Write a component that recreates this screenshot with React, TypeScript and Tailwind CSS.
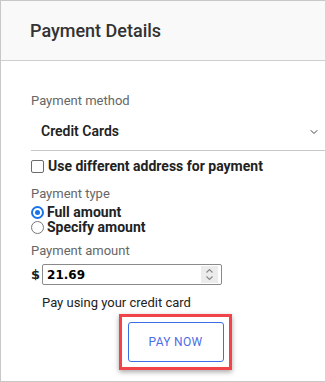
import { ChevronDown } from 'lucide-react'

export default function App() {
  return (
    <div className="w-[325px] h-[382px] bg-white border-l border-t border-b border-[#c8c8c8] font-['Roboto',sans-serif] text-[#333]">
      {/* Header */}
      <div className="h-[60px] bg-[#f9f9f9] border-b border-[#cfcfcf] flex items-center pl-[29px]">
        <h2 className="text-[18px] font-medium text-[#333]">Payment Details</h2>
      </div>

      {/* Body */}
      <div className="pl-[30px] pt-[31px]">
        <div className="text-[13px] text-[#666] leading-[18px]">Payment method</div>
        <div className="mt-[3px] h-[38px] border-b border-[#c8c8c8] flex items-center justify-between pl-[10px] pr-[5px]">
          <span className="text-[14px] font-semibold text-[#222]">Credit Cards</span>
          <ChevronDown size={12} strokeWidth={2} className="text-[#444]" />
        </div>

        <label className="mt-[5px] flex items-center gap-[4px] leading-[21px]">
          <span className="w-[13px] h-[13px] border border-[#6b6b6b] rounded-[2px] bg-white" />
          <span className="text-[14px] font-bold text-[#222]">Use different address for payment</span>
        </label>

        <div className="mt-[9px] text-[13px] text-[#666] leading-[16px]">Payment type</div>
        <div className="mt-[3px] flex flex-col leading-[15px]">
          <label className="flex items-center gap-[3px]">
            <span className="w-[13px] h-[13px] rounded-full border-2 border-[#1a73e8] flex items-center justify-center">
              <span className="w-[5px] h-[5px] rounded-full bg-[#1a73e8]" />
            </span>
            <span className="text-[14px] font-bold text-[#222]">Full amount</span>
          </label>
          <label className="flex items-center gap-[3px]">
            <span className="w-[13px] h-[13px] rounded-full border border-[#777] bg-white" />
            <span className="text-[14px] font-bold text-[#222]">Specify amount</span>
          </label>
        </div>

        <div className="mt-[8px] text-[13px] text-[#666] leading-[16px]">Payment amount</div>
        <div className="mt-[5px] flex items-center gap-[2px]">
          <span className="text-[13px] font-bold text-[#222] font-['DejaVu_Sans',sans-serif]">$</span>
          <div className="w-[180px] h-[21px] border border-[#8a8a8a] rounded-[2px] flex items-center justify-between pl-[4px] pr-[3px]">
            <span className="text-[12px] font-bold text-black font-['DejaVu_Sans',sans-serif]">21.69</span>
            <span className="w-[17px] h-[17px] bg-[#ececec] flex flex-col items-center justify-center">
              <svg width="9" height="13" viewBox="0 0 9 13" fill="none" stroke="#8a8a8a" strokeWidth="1.2">
                <path d="M1.5 4.5 L4.5 1.5 L7.5 4.5" />
                <path d="M1.5 8.5 L4.5 11.5 L7.5 8.5" />
              </svg>
            </span>
          </div>
        </div>

        <div className="mt-[7px] pl-[11px] text-[13px] leading-[21px] text-[#222]">Pay using your credit card</div>

        <div className="mt-[1px] ml-[88px] w-[113px] h-[56px] border-[3px] border-[#f0434a] shadow-[0_2px_5px_rgba(0,0,0,0.35)] flex items-center justify-center">
          <button className="w-[96px] h-[40px] border border-[#3b6fe6] rounded-[3px] bg-white text-[12px] text-[#4b6ee8] tracking-[0.3px]">
            PAY NOW
          </button>
        </div>
      </div>
    </div>
  )
}
